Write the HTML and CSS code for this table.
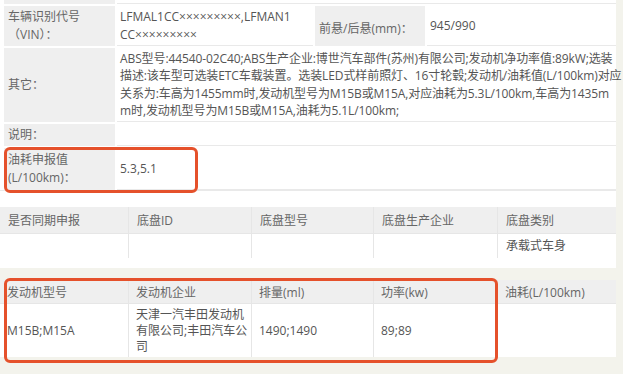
FILE: index.html
```html
<!DOCTYPE html>
<html lang="zh-CN">
<head>
<meta charset="utf-8">
<title>车辆参数</title>
<link rel="stylesheet" href="styles.css">
</head>
<body>
<div class="page">
  <div class="sheet">
    <div class="info">
      <div class="lbl stub"></div><div class="val stub wide"></div>

      <div class="lbl"><span>车辆识别代号<br>（VIN）：</span></div>
      <div class="val"><span>LFMAL1CC×××××××××,LFMAN1<br>CC×××××××××</span></div>
      <div class="lbl lbl2"><span>前悬/后悬(mm)：</span></div>
      <div class="val"><span>945/990</span></div>

      <div class="lbl"><span>其它：</span></div>
      <div class="val wide lines"><span>ABS型号:44540-02C40;ABS生产企业:博世汽车部件(苏州)有限公司;发动机净功率值:89kW;选装<br>描述:该车型可选装ETC车载装置。选装LED式样前照灯、16寸轮毂;发动机/油耗值(L/100km)对应<br>关系为:车高为1455mm时,发动机型号为M15B或M15A,对应油耗为5.3L/100km,车高为1435m<br>m时,发动机型号为M15B或M15A,油耗为5.1L/100km;</span></div>

      <div class="lbl"><span>说明：</span></div>
      <div class="val wide"></div>

      <div class="lbl"><span>油耗申报值<br>(L/100km)：</span></div>
      <div class="val wide"><span>5.3,5.1</span></div>
    </div>
    <div class="spacer"></div>
    <div class="grid chassis">
      <div class="th"><span>是否同期申报</span></div>
      <div class="th"><span>底盘ID</span></div>
      <div class="th"><span>底盘型号</span></div>
      <div class="th"><span>底盘生产企业</span></div>
      <div class="th"><span>底盘类别</span></div>
      <div class="td"></div>
      <div class="td"></div>
      <div class="td"></div>
      <div class="td"></div>
      <div class="td"><span>承载式车身</span></div>
    </div>
    <div class="tail"></div>
  </div>
  <div class="grid engine">
    <div class="th"><span>发动机型号</span></div>
    <div class="th"><span>发动机企业</span></div>
    <div class="th"><span>排量(ml)</span></div>
    <div class="th"><span>功率(kw)</span></div>
    <div class="th"><span>油耗(L/100km)</span></div>
    <div class="td"><span>M15B;M15A</span></div>
    <div class="td tight"><span>天津一汽丰田发动机<br>有限公司;丰田汽车公<br>司</span></div>
    <div class="td"><span>1490;1490</span></div>
    <div class="td"><span>89;89</span></div>
    <div class="td"></div>
  </div>
  <div class="mark mark-fuel"></div>
  <div class="mark mark-engine"></div>
</div>
</body>
</html>
```

FILE: styles.css
```css
html, body {
  margin: 0;
  padding: 0;
  background: #f3f3ec;
}
body {
  font-family: "Open Sans", "Noto Sans CJK SC", sans-serif;
  font-size: 12px;
  color: #555;
  width: 623px;
  height: 374px;
  overflow: hidden;
}
.page {
  position: relative;
  width: 616px;
}
.sheet {
  background: #fff;
}
.info {
  display: grid;
  grid-template-columns: 111px 196px 110px 1fr;
  grid-template-rows: 4px 40px 74px 22px 42px;
  gap: 2px;
  padding-left: 4px;
  background: #fff;
}
.lbl {
  background: #efefef;
  color: #666;
  padding: 0 4px;
  display: flex;
  align-items: center;
  line-height: 18px;
}
.val {
  background: #fff;
  border-bottom: 1px solid #e9e9e9;
  padding: 0 3px;
  display: flex;
  align-items: center;
  line-height: 18px;
  white-space: nowrap;
}
.lbl2 {
  padding-top: 6px;
}
.wide {
  grid-column: 2 / 5;
}
.stub {
  padding: 0;
}
.lines {
  line-height: 17.5px;
  letter-spacing: -0.1px;
}
.spacer {
  height: 16px;
  border-top: 1px solid #e9e9e9;
}
.grid {
  display: grid;
  grid-template-columns: 128px 122px 121px 123px 1fr;
  column-gap: 1px;
  row-gap: 1px;
  background: #e6e6e6;
}
.chassis {
  grid-template-rows: 26px 24px;
}
.engine {
  grid-template-rows: 23px 53px;
  margin-top: 12px;
}
.th {
  background: #efefef;
  color: #666;
  padding: 0 0 0 8px;
  display: flex;
  align-items: center;
  white-space: nowrap;
}
.engine .th {
  padding-left: 7px;
}
.td {
  background: #fff;
  padding: 0 0 0 8px;
  display: flex;
  align-items: center;
  line-height: 18px;
  white-space: nowrap;
}
.engine .td {
  padding-left: 7px;
}
.tight {
  line-height: 16px;
}
.tail {
  height: 10px;
  background: #fff;
}
.mark {
  position: absolute;
  border: 3px solid #e5512b;
  border-radius: 6px;
  box-sizing: border-box;
}
.mark-fuel {
  left: 4px;
  top: 147px;
  width: 194px;
  height: 46px;
}
.mark-engine {
  left: 4px;
  top: 278px;
  width: 494px;
  height: 85px;
}
```
